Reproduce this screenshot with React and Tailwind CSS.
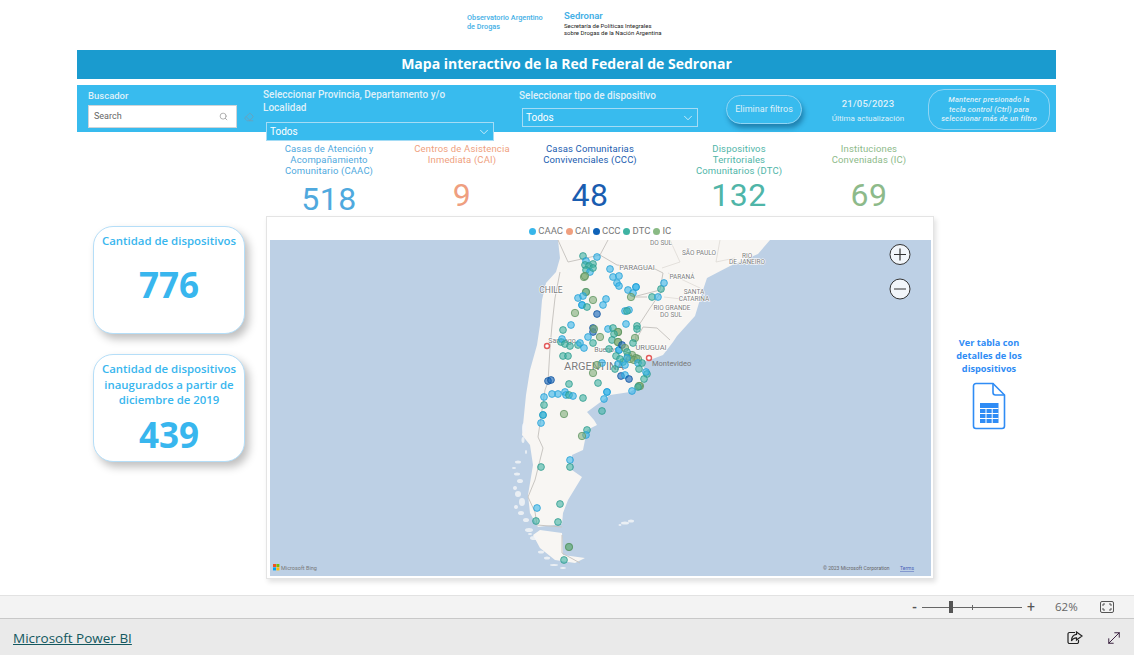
import { ChevronDown, Eraser, MoveDiagonal, Search } from 'lucide-react';

const PIN_COLORS = {
  A: ['#38b6ea', '#1f9ed6'],
  B: ['#0f62b8', '#0b4f9c'],
  D: ['#3fb3a3', '#2a9a8c'],
  I: ['#7fae78', '#5f9460'],
};

// [x, y, type] in page coordinates, the svg viewBox uses the same ones
const pins = [
  [583, 256, 'D'], [597, 257, 'A'], [586, 261, 'A'], [585, 265, 'D'], [589, 266, 'D'], [593, 264, 'D'], [586, 270, 'D'], [590, 272, 'A'],
  [593, 268, 'D'], [584, 277, 'I'], [585, 276, 'I'], [610, 269, 'A'], [613, 277, 'A'], [619, 276, 'A'], [617, 283, 'A'], [619, 286, 'A'],
  [636, 287, 'A'], [636, 287, 'A'], [628, 290, 'A'], [633, 293, 'A'], [631, 297, 'I'], [652, 297, 'D'], [658, 297, 'A'], [661, 289, 'D'], [664, 283, 'A'],
  [586, 292, 'D'], [586, 292, 'I'], [578, 298, 'A'], [583, 296, 'A'], [593, 300, 'I'], [606, 299, 'A'], [603, 305, 'A'], [582, 305, 'A'],
  [582, 305, 'A'], [587, 307, 'D'], [575, 313, 'I'], [597, 314, 'B'], [625, 311, 'A'], [629, 310, 'A'], [627, 311, 'D'], [571, 325, 'A'],
  [626, 324, 'A'], [637, 326, 'D'], [637, 329, 'D'], [593, 328, 'B'], [593, 332, 'B'], [594, 329, 'I'], [563, 330, 'D'], [608, 329, 'A'],
  [613, 328, 'D'], [618, 332, 'I'], [618, 332, 'I'], [614, 334, 'D'], [588, 337, 'A'], [600, 337, 'I'], [635, 338, 'I'], [612, 340, 'D'],
  [618, 342, 'I'], [618, 342, 'I'], [561, 342, 'D'], [562, 339, 'A'], [565, 344, 'D'], [570, 346, 'D'], [578, 345, 'D'], [580, 343, 'A'],
  [584, 348, 'A'], [593, 343, 'D'], [633, 343, 'D'], [619, 350, 'A'], [619, 350, 'A'], [622, 345, 'B'], [609, 349, 'D'], [625, 348, 'I'], [616, 356, 'D'],
  [628, 356, 'I'], [632, 355, 'I'], [636, 358, 'I'], [630, 359, 'I'], [634, 360, 'I'], [638, 359, 'I'], [627, 352, 'D'], [623, 362, 'D'],
  [627, 358, 'A'], [620, 359, 'D'], [618, 364, 'A'], [625, 365, 'A'], [638, 363, 'A'], [642, 363, 'D'], [563, 356, 'D'], [568, 356, 'D'],
  [602, 363, 'A'], [597, 365, 'I'], [615, 369, 'D'], [639, 369, 'D'], [593, 373, 'I'], [621, 376, 'B'], [625, 375, 'A'], [629, 379, 'B'],
  [647, 374, 'D'], [646, 372, 'A'], [644, 379, 'D'], [548, 381, 'B'], [551, 380, 'B'], [569, 384, 'D'], [598, 383, 'D'],
  [640, 386, 'I'], [639, 386, 'I'], [638, 387, 'D'], [632, 391, 'A'], [607, 392, 'A'], [607, 392, 'A'], [604, 399, 'A'], [583, 398, 'D'], [565, 392, 'A'],
  [566, 395, 'A'], [569, 395, 'D'], [573, 396, 'A'], [558, 394, 'A'], [552, 394, 'A'], [544, 397, 'A'], [544, 405, 'D'], [543, 415, 'D'],
  [543, 415, 'A'], [541, 423, 'A'], [564, 414, 'I'], [602, 411, 'D'], [587, 430, 'D'], [586, 435, 'A'], [582, 436, 'I'], [570, 460, 'A'],
  [570, 467, 'D'], [541, 467, 'D'], [560, 504, 'D'], [537, 508, 'A'], [536, 521, 'D'], [558, 522, 'D'], [569, 547, 'D'], [569, 547, 'I'], [564, 560, 'D'],
];

const mapLabels = [
  ['CHILE', 551, 293, 8.5], ['PARAGUAI', 637, 270, 7.5], ['PARANÁ', 682, 279, 6.5], ['SANTA', 694, 294, 6.5], ['CATARINA', 694, 301, 6.5],
  ['RIO GRANDE', 672, 310, 6.5], ['DO SUL', 671, 317, 6.5], ['URUGUAI', 651, 350, 7.5], ['ARGENTINA', 594, 370, 11], ['SÃO PAULO', 699, 255, 6.5],
  ['DO SUL', 661, 245, 6.5], ['RIO', 747, 258, 6.5], ['DE JANEIRO', 747, 264, 6.5], ['Santiago', 562, 343, 7], ['Buenos', 606, 352, 7],
];

const islands = [
  [524, 428, 2, 5], [523, 440, 1.5, 3], [526, 452, 1, 2], [518, 462, 3, 1.5], [514, 468, 2, 1], [517, 474, 3, 1.5], [520, 481, 3, 2], [515, 488, 2, 2],
  [518, 494, 3, 3], [522, 502, 3, 4], [516, 507, 2, 2], [521, 513, 3, 2], [526, 520, 3, 2], [529, 530, 4, 2], [534, 538, 4, 2], [530, 534, 2, 1],
  [541, 552, 3, 1.5], [547, 558, 3, 1.5], [554, 565, 4, 1], [563, 568, 3, 1], [625, 523, 4, 1.5], [631, 521, 3, 1.5], [620, 525, 1.5, 1],
];

const ArgentinaMap = () => (
  <svg viewBox="270 240 661 336" className="block h-[336px] w-[661px]">
    <rect x="270" y="240" width="661" height="336" fill="#bdd0e5" />
    <path
      d="M558 240 L560 258 L556 272 L546 283 L542 300 L540 325 L537 345 L530 370 L526 395 L524 415 L522 435 L530 445 L533 465 L528 495 L530 513 L538 527 L562 524 L563 513 L568 500 L582 477 L572 470 L572 455 L583 450 L587 430 L597 425 L594 420 L587 412 L610 395 L630 392 L642 385 L648 378 L647 372 L640 362 L650 360 L663 355 L673 342 L677 336 L695 316 L702 293 L707 278 L730 266 L758 254 L770 240 Z"
      fill="#f8f6f3"
    />
    <path d="M540 530 L562 533 L563 555 L585 558 L575 563 L555 560 L540 548 L533 535 Z" fill="#f8f6f3" />
    {islands.map(([cx, cy, rx, ry], i) => (
      <ellipse key={i} cx={cx} cy={cy} rx={rx} ry={ry} fill="#f5f6f8" opacity="0.8" />
    ))}
    <g fill="none" stroke="#c9c6c2" strokeWidth="1">
      <path d="M558 240 L568 262 L600 255 L608 240" />
      <path d="M600 255 L617 265 L653 268 L663 273 L660 290 L633 297 L647 297" />
      <path d="M666 285 L650 308 L637 328 L635 342 L643 327 L657 328 L670 340" />
      <path d="M560 272 L555 298 L552 325 L550 348 L548 382 L545 390 L538 437 L543 448 L535 480 L528 497 L535 512 L537 525 L562 527" />
      <path d="M562 535 L562 553 L580 563" />
    </g>
    <g fill="none" stroke="#dedbd6" strokeWidth="0.8">
      <path d="M670 240 L680 262 L662 268" />
      <path d="M668 273 L700 288 L705 292" />
      <path d="M664 297 L690 300" />
      <path d="M720 240 L716 262 L735 258" />
    </g>
    {mapLabels.map(([text, x, y, size]) => (
      <text
        key={text + x}
        x={x}
        y={y}
        textAnchor="middle"
        fontSize={size}
        fill="#7c7c7c"
        stroke="#ffffff"
        strokeWidth="1.2"
        paintOrder="stroke"
        className="font-['Roboto',sans-serif]"
      >
        {text}
      </text>
    ))}
    <circle cx="547" cy="346" r="2.5" fill="#fff" stroke="#e25a5a" strokeWidth="1.4" />
    <circle cx="649" cy="358" r="2.5" fill="#fff" stroke="#e25a5a" strokeWidth="1.4" />
    <text x="652" y="366" fontSize="7.5" fill="#777" className="font-['Roboto',sans-serif]">
      Montevideo
    </text>
    {pins.map(([x, y, type], i) => (
      <circle
        key={i}
        cx={x}
        cy={y}
        r={type === 'I' ? 3.7 : 3.4}
        fill={PIN_COLORS[type][0]}
        fillOpacity="0.6"
        stroke={PIN_COLORS[type][1]}
        strokeOpacity="0.75"
        strokeWidth="1"
      />
    ))}
    <rect x="273" y="564" width="3" height="3" fill="#f25022" />
    <rect x="276.4" y="564" width="3" height="3" fill="#7fba00" />
    <rect x="273" y="567.4" width="3" height="3" fill="#00a4ef" />
    <rect x="276.4" y="567.4" width="3" height="3" fill="#ffb900" />
    <text x="281" y="569.5" fontSize="5.5" fill="#777" className="font-['Roboto',sans-serif]">
      Microsoft Bing
    </text>
    <text x="823" y="570" fontSize="5" fill="#666" className="font-['Roboto',sans-serif]">
      © 2023 Microsoft Corporation
    </text>
    <text x="900" y="570" fontSize="5" fill="#4a62b8" textDecoration="underline" className="font-['Roboto',sans-serif]">
      Terms
    </text>
    <g fill="#ffffff" fillOpacity="0.8" stroke="#333" strokeWidth="1">
      <circle cx="900" cy="254.5" r="10" />
      <circle cx="900" cy="289" r="10" />
    </g>
    <path d="M894 254.5 H906 M900 248.5 V260.5 M894 289 H906" stroke="#333" strokeWidth="1.2" />
  </svg>
);

const Kpi = ({ width, color, lines, value, labelClass = 'h-[35px]' }) => (
  <div className={`${width} flex flex-col items-center`}>
    <p className={`shrink-0 whitespace-nowrap text-center text-[9.5px] leading-[11px] tracking-[0.15px] ${color} ${labelClass}`}>
      {lines.map((line) => (
        <span key={line} className="block">
          {line}
        </span>
      ))}
    </p>
    <p className={`shrink-0 text-[32px] leading-[34px] tracking-[0.5px] ${color}`}>{value}</p>
  </div>
);

const StatCard = ({ title, value, valueClass }) => (
  <div className="flex h-[108px] w-[152px] flex-col items-center rounded-[20px] border border-[#b5def8] bg-white px-1 pt-[6px] shadow-[4px_5px_8px_rgba(0,0,0,0.25)]">
    <p className="text-center font-['Open_Sans',sans-serif] text-[11.4px] leading-[15.5px] font-semibold whitespace-nowrap text-[#38b6ee]">
      {title}
    </p>
    <p className={`font-['Open_Sans',sans-serif] text-[35px] leading-[40px] font-bold text-[#38b6ee] ${valueClass}`}>{value}</p>
  </div>
);

const SheetIcon = () => (
  <svg viewBox="0 0 34 48" className="h-[48px] w-[34px]" fill="none" stroke="#2f8cf5" strokeWidth="1.6">
    <path d="M4 1.5 H21 L32.5 13 V44 A2.5 2.5 0 0 1 30 46.5 H4 A2.5 2.5 0 0 1 1.5 44 V4 A2.5 2.5 0 0 1 4 1.5 Z" />
    <path d="M21 1.5 V10.5 A2.5 2.5 0 0 0 23.5 13 H32.5" />
    <rect x="8" y="21" width="18.5" height="20" fill="#2f8cf5" stroke="none" />
    <path d="M8 26.5 H26.5 M8 31.5 H26.5 M8 36.5 H26.5 M14 26 V41 M20.2 26 V41" stroke="#ffffff" strokeWidth="1" />
  </svg>
);

const App = () => {
  return (
    <div className="flex h-[655px] w-[1134px] flex-col overflow-hidden bg-white font-['Roboto',sans-serif]">
      <div className="h-[595px] pl-[77px]">
        {/* Logos */}
        <div className="flex h-[50px] w-[979px] items-start pt-[12px] pl-[390px]">
          <p className="w-[97px] pt-px text-[7.3px] leading-[9px] font-medium text-[#45b0e6]">
            Observatorio Argentino
            <br />
            de Drogas
          </p>
          <div>
            <p className="text-[9.5px] leading-[7px] font-semibold text-[#45b0e6]">Sedronar</p>
            <p className="mt-[4px] text-[6px] leading-[6.8px] text-[#222]">
              Secretaría de Políticas Integrales
              <br />
              sobre Drogas de la Nación Argentina
            </p>
          </div>
        </div>

        {/* Title */}
        <div className="flex h-[29px] w-[979px] items-center justify-center bg-[#1a9bcf] pb-[2px] font-['Open_Sans',sans-serif] text-[14px] font-bold text-white">
          Mapa interactivo de la Red Federal de Sedronar
        </div>

        {/* Filters */}
        <div className="mt-[6px] flex h-[47px] w-[979px] bg-[#38bbee] text-[#dff0f9]">
          <div className="ml-[11px] w-[166px] pt-[5px]">
            <p className="text-[9.5px] leading-[12px] font-medium">Buscador</p>
            <div className="mt-[3px] flex h-[23px] w-[149px] items-center justify-between border border-[#cfd4d8] bg-white pr-2 pl-[5px] text-[9px] text-[#666]">
              Search
              <Search size={9} className="text-[#999]" />
            </div>
          </div>
          <Eraser size={10} className="mt-[27px] -ml-[10px] text-[#6d9fb8]" />
          <div className="ml-[9px] w-[256px] pt-[4px]">
            <p className="text-[10px] leading-[12.5px] font-medium">
              Seleccionar Provincia, Departamento y/o
              <br />
              Localidad
            </p>
            <div className="mt-[8px] ml-[3px] flex h-[19px] w-[228px] items-center justify-between border border-[#a5dcf5] bg-[#38bbee] pr-[2px] pl-[3px] text-[10px] text-white">
              Todos
              <ChevronDown size={14} strokeWidth={1.2} />
            </div>
          </div>
          <div className="w-[207px] pt-[4px]">
            <p className="text-[10px] leading-[13px] font-medium">Seleccionar tipo de dispositivo</p>
            <div className="mt-[6px] ml-[3px] flex h-[19px] w-[176px] items-center justify-between border border-[#a5dcf5] pr-[2px] pl-[3px] text-[10px] text-white">
              Todos
              <ChevronDown size={14} strokeWidth={1.2} />
            </div>
          </div>
          <div className="mt-[10px] flex h-[29px] w-[76px] items-center justify-center rounded-[15px] border border-[#8fd5f4] bg-[#38bbee] text-[9px] shadow-[2px_4px_5px_rgba(0,60,100,0.45)]">
            Eliminar filtros
          </div>
          <div className="w-[126px] pt-[13px] pl-[6px] text-center">
            <p className="text-[9.5px] leading-[12px] font-medium tracking-[0.2px]">21/05/2023</p>
            <p className="mt-[4px] text-[8px] leading-[10px]">Última actualización</p>
          </div>
          <div className="mt-[4px] flex h-[41px] w-[122px] items-center justify-center rounded-[16px] border border-[#8fd5f4] text-center text-[7.6px] leading-[9.5px] font-medium tracking-[0.15px] italic">
            <span>
              Mantener presionado la
              <br />
              tecla control (Ctrl) para
              <br />
              seleccionar más de un filtro
            </span>
          </div>
        </div>

        {/* Counters, the bottom of 518 is cut off like in the report */}
        <div className="mt-[11px] mb-[5px] flex h-[68px] overflow-hidden pl-[189px]">
          <Kpi width="w-[126px]" color="text-[#4fa9de]" lines={['Casas de Atención y', 'Acompañamiento', 'Comunitario (CAAC)']} value="518" labelClass="h-[39px]" />
          <Kpi width="w-[140px]" color="text-[#ef9f80]" lines={['Centros de Asistencia', 'Inmediata (CAI)']} value="9" />
          <Kpi width="w-[116px]" color="text-[#1a5db0]" lines={['Casas Comunitarias', 'Convivenciales (CCC)']} value="48" />
          <Kpi width="w-[182px]" color="text-[#4fb5a8]" lines={['Dispositivos', 'Territoriales', 'Comunitarios (DTC)']} value="132" />
          <Kpi width="w-[78px]" color="text-[#8dba8a]" lines={['Instituciones', 'Conveniadas (IC)']} value="69" />
        </div>

        {/* Main row */}
        <div className="flex">
          <div className="mt-[10px] ml-[16px] flex w-[173px] flex-col gap-5">
            <StatCard title="Cantidad de dispositivos" value="776" valueClass="mt-[16px]" />
            <StatCard
              title={
                <>
                  Cantidad de dispositivos
                  <br />
                  inaugurados a partir de
                  <br />
                  diciembre de 2019
                </>
              }
              value="439"
              valueClass="mt-[7px]"
            />
          </div>
          <div className="h-[363px] w-[668px] border border-[#e4e4e4] bg-white px-[3px] shadow-[2px_3px_5px_rgba(0,0,0,0.12)]">
            <div className="flex h-[23px] items-center justify-center gap-[2.5px] pt-[5px] text-[9.5px] text-[#777]">
              <span className="size-[7px] rounded-full bg-[#38b6ea]" /> CAAC
              <span className="size-[7px] rounded-full bg-[#f0a080]" /> CAI
              <span className="size-[7px] rounded-full bg-[#0f62b8]" /> CCC
              <span className="size-[7px] rounded-full bg-[#3fb3a3]" /> DTC
              <span className="size-[7px] rounded-full bg-[#8aba84]" /> IC
            </div>
            <ArgentinaMap />
          </div>
          <div className="flex w-[110px] flex-col items-center pt-[120px]">
            <p className="text-center font-['Open_Sans',sans-serif] text-[9.2px] leading-[13px] font-bold whitespace-nowrap text-[#2f8cf5]">
              Ver tabla con
              <br />
              detalles de los
              <br />
              dispositivos
            </p>
            <div className="mt-[7px]">
              <SheetIcon />
            </div>
          </div>
        </div>
      </div>

      {/* Zoom bar */}
      <div className="flex h-[23px] items-center border-t border-[#e2e2e2] bg-[#f3f3f3] pl-[912px] text-[#555]">
        <span className="w-[10px] text-[13px] leading-none font-bold">-</span>
        <div className="flex h-3 w-[100px] items-center">
          <div className="relative h-px w-full bg-[#666]">
            <span className="absolute top-[-6px] left-[27px] h-[12px] w-1 bg-[#555]" />
            <span className="absolute top-[-2px] left-[50px] h-[5px] w-px bg-[#666]" />
          </div>
        </div>
        <span className="ml-[5px] w-[10px] text-[14px] leading-none">+</span>
        <span className="ml-[18px] font-['Open_Sans',sans-serif] text-[11.5px] text-[#666]">62%</span>
        <svg viewBox="0 0 14 12" className="ml-[22px] h-[12px] w-[14px]" fill="none" stroke="#555" strokeWidth="1">
          <rect x="0.5" y="0.5" width="13" height="11" rx="1.5" />
          <path d="M3 5 V3 H5 M9 3 H11 V5 M11 7 V9 H9 M5 9 H3 V7" />
        </svg>
      </div>

      {/* Footer */}
      <div className="flex flex-1 items-center border-t border-[#c8c8c8] bg-[#eaeaea] pt-[2px] pr-[11px] pl-[13px]">
        <a className="font-['Open_Sans',sans-serif] text-[13.5px] text-[#13585f] underline">Microsoft Power BI</a>
        <svg viewBox="0 0 16 14" className="mr-[22px] ml-auto h-[14px] w-[16px]" fill="none" stroke="#222" strokeWidth="1.2">
          <path d="M8 1.5 H2.5 A1.5 1.5 0 0 0 1 3 V11 A1.5 1.5 0 0 0 2.5 12.5 H10 A1.5 1.5 0 0 0 11.5 11 V9" />
          <path d="M9.5 1 L15 5 L9.5 9 V6.8 C7 6.8 5.5 7.8 4.5 10 C4.5 6.5 6.5 3.8 9.5 3.4 Z" />
        </svg>
        <MoveDiagonal size={18} strokeWidth={1.2} className="text-[#2a1030]" />
      </div>
    </div>
  );
};

export default App;
